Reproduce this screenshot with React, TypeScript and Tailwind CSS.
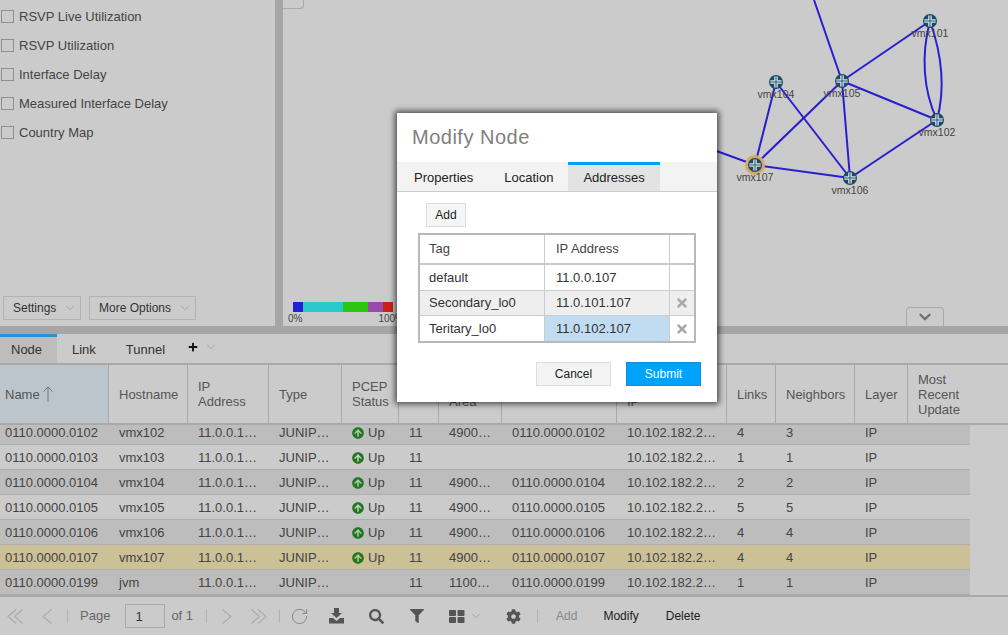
import { ChevronDown, RotateCw } from "lucide-react";
import { FaArrowCircleUp, FaCog, FaFilter, FaPlus, FaSearch, FaTimes } from "react-icons/fa";

const overlays = ["RSVP Live Utilization", "RSVP Utilization", "Interface Delay", "Measured Interface Delay", "Country Map"];

const nodes = [
  { name: "vmx101", x: 930, y: 21 },
  { name: "vmx105", x: 842, y: 81 },
  { name: "vmx104", x: 776, y: 82 },
  { name: "vmx102", x: 937, y: 120 },
  { name: "vmx107", x: 755, y: 165 },
  { name: "vmx106", x: 850, y: 178 },
];

const links = [
  [842, 81, 814, 0],
  [842, 81, 930, 21],
  [842, 81, 937, 120],
  [842, 81, 850, 178],
  [842, 81, 755, 165],
  [776, 82, 755, 165],
  [776, 82, 850, 178],
  [755, 165, 850, 178],
  [850, 178, 937, 120],
  [755, 165, 700, 145],
];

const cols = "grid grid-cols-[108px_79px_81px_73px_57px_40px_63px_115px_110px_49px_79px_53px_63px]";

const rows = [
  { id: "0110.0000.0102", host: "vmx102", up: true, area: "4900…", iso: "0110.0000.0102", links: 4, nb: 3, bg: "bg-[#bdbdbd]" },
  { id: "0110.0000.0103", host: "vmx103", up: true, area: "", iso: "", links: 1, nb: 1, bg: "bg-[#cbcbcb]" },
  { id: "0110.0000.0104", host: "vmx104", up: true, area: "4900…", iso: "0110.0000.0104", links: 2, nb: 2, bg: "bg-[#bdbdbd]" },
  { id: "0110.0000.0105", host: "vmx105", up: true, area: "4900…", iso: "0110.0000.0105", links: 5, nb: 5, bg: "bg-[#cbcbcb]" },
  { id: "0110.0000.0106", host: "vmx106", up: true, area: "4900…", iso: "0110.0000.0106", links: 4, nb: 4, bg: "bg-[#bdbdbd]" },
  { id: "0110.0000.0107", host: "vmx107", up: true, area: "4900…", iso: "0110.0000.0107", links: 4, nb: 4, bg: "bg-[#ccc097]" },
  { id: "0110.0000.0199", host: "jvm", up: false, area: "1100…", iso: "0110.0000.0199", links: 1, nb: 1, bg: "bg-[#bdbdbd]" },
];

function RouterNode({ x, y, selected }: { x: number; y: number; selected?: boolean }) {
  return (
    <g transform={`translate(${x} ${y})`}>
      {selected && <circle r="10" fill="#d9a862" />}
      <circle r="7" fill="#1d4a66" />
      <path d="M-1.8 -5.6H1.8V-1.8H5.6V1.8H1.8V5.6H-1.8V1.8H-5.6V-1.8H-1.8Z" fill="#d5e2e8" />
      <path d="M0 -5.6V5.6M-5.6 0H5.6" stroke="#1d4a66" strokeWidth="0.9" />
    </g>
  );
}

function HeaderCell({ children, active, first }: { children: React.ReactNode; active?: boolean; first?: boolean }) {
  return (
    <div className={`flex items-center leading-[15px] ${first ? "pl-[5px]" : "pl-[10px] border-l border-[#a9a9a9]"} ${active ? "bg-[#bcc5cc]" : ""}`}>
      {children}
    </div>
  );
}

function Cell({ children, first }: { children?: React.ReactNode; first?: boolean }) {
  return <div className={`whitespace-nowrap pt-[1px] ${first ? "pl-[5px]" : "pl-[11px]"}`}>{children}</div>;
}

function Separator() {
  return <div className="w-px h-[14px] bg-[#b4b4b4]" />;
}

function PageArrow({ right, double, className }: { right?: boolean; double?: boolean; className?: string }) {
  const w = double ? 16 : 10;
  const d = double ? "M9 0.5L1 7.5L9 14.5M15.5 0.5L7.5 7.5L15.5 14.5" : "M9.5 0.5L1 7.5L9.5 14.5";
  return (
    <svg className={`${right ? "-scale-x-100" : ""} ${className ?? ""}`} width={w} height="15" viewBox={`0 0 ${w} 15`} fill="none" stroke="#aaaaaa" strokeWidth="1.1">
      <path d={d} />
    </svg>
  );
}

export default function App() {
  return (
    <div className="relative w-[1008px] h-[635px] overflow-hidden bg-[#cbcbcb] text-[13px] text-[#444] font-['Liberation_Sans',Arial,sans-serif]">
      {/* Top area */}
      <div className="flex h-[326px]">
        <div className="w-[275px] flex flex-col justify-between pt-[2px] pb-[6px]">
          <div>
            {overlays.map((label) => (
              <div key={label} className="flex items-center h-[29px] pl-[1px]">
                <span className="w-[13px] h-[13px] border border-[#8f8f8f] mr-[5px]" />
                <span>{label}</span>
              </div>
            ))}
          </div>
          <div className="flex gap-[8px] pl-[3px] text-[12px] text-[#333]">
            <button className="flex items-center justify-between w-[78px] h-[24px] border border-[#b2b2b2] pl-[9px] pr-[3px]">
              Settings <ChevronDown size={14} strokeWidth={1} className="text-[#888]" />
            </button>
            <button className="flex items-center justify-between w-[107px] h-[24px] border border-[#b2b2b2] pl-[9px] pr-[3px]">
              More Options <ChevronDown size={14} strokeWidth={1} className="text-[#888]" />
            </button>
          </div>
        </div>
        <div className="w-[8px] bg-[#a6a6a6]" />

        {/* Topology canvas */}
        <div className="relative flex-1">
          <svg className="absolute inset-0 w-[725px] h-[326px]" viewBox="283 0 725 326">
            <g stroke="#2a1fd0" strokeWidth="2" fill="none">
              {links.map((l, i) => (
                <line key={i} x1={l[0]} y1={l[1]} x2={l[2]} y2={l[3]} />
              ))}
              <path d="M930 21C921 55 923 90 937 120" />
              <path d="M930 21C942 55 945 90 937 120" />
            </g>
            {nodes.map((n) => (
              <g key={n.name}>
                <RouterNode x={n.x} y={n.y} selected={n.name === "vmx107"} />
                <text x={n.x} y={n.y + 16} textAnchor="middle" fontSize="10.5" fill="#444">
                  {n.name}
                </text>
              </g>
            ))}
          </svg>
          <div className="absolute left-0 top-0 w-[21px] h-[9px] border-r border-b border-[#a9a9a9] rounded-br-[4px]" />
          <div className="absolute left-[5px] top-[302px] w-[120px] text-[10px] leading-[11px] text-[#444]">
            <div className="flex h-[10px] ml-[5px]">
              <div className="w-[10px] bg-[#2222d0]" />
              <div className="w-[40px] bg-[#2ac9cc]" />
              <div className="w-[25px] bg-[#2cc510]" />
              <div className="w-[15px] bg-[#9b47ab]" />
              <div className="w-[10px] bg-[#c92316]" />
            </div>
            <div className="flex justify-between mt-[1px] w-[116px]">
              <span>0%</span>
              <span>100%</span>
            </div>
          </div>
          <div className="absolute left-[623px] top-[307px] w-[38px] h-[19px] border border-b-0 border-[#a9a9a9] rounded-t-[4px] flex items-center justify-center">
            <ChevronDown size={18} strokeWidth={3.2} className="text-[#707070]" />
          </div>
        </div>
      </div>
      <div className="h-[8px] bg-[#a6a6a6]" />

      {/* Tabs */}
      <div className="flex h-[31px] border-b-[2px] border-[#a9a9a9] text-[#333]">
        <div className="w-[57px] h-[29px] border-t-[3px] border-[#2a8ed8] bg-[#bdbdbd] pl-[11px] pt-[3px] leading-[20px]">Node</div>
        <div className="pl-[15px] pt-[6px] leading-[20px]">Link</div>
        <div className="pl-[30px] pt-[6px] leading-[20px]">Tunnel</div>
        <div className="flex items-center pl-[23px] pb-[4px]">
          <FaPlus size={10} className="text-[#111]" />
          <ChevronDown size={14} strokeWidth={1} className="ml-[6px] text-[#888]" />
        </div>
      </div>

      {/* Table header */}
      <div className={`${cols} h-[60px] border-b-[2px] border-[#a9a9a9] text-[#555]`}>
        <HeaderCell first active>
          Name
          <svg className="ml-[3px]" width="10" height="16" viewBox="0 0 10 16" fill="none" stroke="#777777" strokeWidth="1">
            <path d="M5 1V16M0.5 5.5L5 1L9.5 5.5" />
          </svg>
        </HeaderCell>
        <HeaderCell>Hostname</HeaderCell>
        <HeaderCell>IP<br />Address</HeaderCell>
        <HeaderCell>Type</HeaderCell>
        <HeaderCell>PCEP<br />Status</HeaderCell>
        <HeaderCell>AS</HeaderCell>
        <HeaderCell>ISIS<br />Area</HeaderCell>
        <HeaderCell>ISO</HeaderCell>
        <HeaderCell>Management<br />IP</HeaderCell>
        <HeaderCell>Links</HeaderCell>
        <HeaderCell>Neighbors</HeaderCell>
        <HeaderCell>Layer</HeaderCell>
        <HeaderCell>Most<br />Recent<br />Update</HeaderCell>
      </div>

      {/* Table rows */}
      <div className="h-[170px] overflow-hidden">
        <div className="-mt-[5px]">
          {rows.map((r) => (
            <div key={r.id} className={`${cols} w-[970px] h-[25px] items-center border-b border-[#aeaeae] ${r.bg}`}>
              <Cell first>{r.id}</Cell>
              <Cell>{r.host}</Cell>
              <Cell>11.0.0.1…</Cell>
              <Cell>JUNIP…</Cell>
              <Cell>
                {r.up && (
                  <span className="flex items-center gap-[4px]">
                    <FaArrowCircleUp size={12} className="text-[#1c7a1c]" /> Up
                  </span>
                )}
              </Cell>
              <Cell>11</Cell>
              <Cell>{r.area}</Cell>
              <Cell>{r.iso}</Cell>
              <Cell>10.102.182.2…</Cell>
              <Cell>{r.links}</Cell>
              <Cell>{r.nb}</Cell>
              <Cell>IP</Cell>
              <Cell />
            </div>
          ))}
        </div>
      </div>

      {/* Footer toolbar */}
      <div className="flex items-center h-[40px] border-t-[2px] border-[#a9a9a9] text-[#666]">
        <PageArrow double className="ml-[7px]" />
        <PageArrow className="ml-[19px]" />
        <div className="ml-[15px]"><Separator /></div>
        <span className="ml-[12px]">Page</span>
        <div className="ml-[15px] w-[40px] h-[24px] border border-[#a9a9a9] pl-[9px] leading-[24px] text-[#333]">1</div>
        <span className="ml-[6px]">of 1</span>
        <div className="ml-[13px]"><Separator /></div>
        <PageArrow right className="ml-[15px]" />
        <PageArrow right double className="ml-[19px]" />
        <div className="ml-[12px]"><Separator /></div>
        <RotateCw size={19} strokeWidth={1} className="ml-[10px] text-[#777]" />
        <svg className="ml-[19px]" width="17" height="16" viewBox="0 0 17 16" fill="#555">
          <path d="M6 0H11V5H14L8.5 10L3 5H6Z" />
          <path d="M1 10H5L8.5 13L12 10H16V15.5H1Z" />
        </svg>
        <FaSearch size={15} className="ml-[24px] text-[#555]" />
        <FaFilter size={14} className="ml-[26px] text-[#555]" />
        <svg className="ml-[25px]" width="16" height="13" viewBox="0 0 16 13" fill="#555">
          <rect width="7" height="6" rx="1" />
          <rect x="8.5" width="7" height="6" rx="1" />
          <rect y="7" width="7" height="6" rx="1" />
          <rect x="8.5" y="7" width="7" height="6" rx="1" />
        </svg>
        <ChevronDown size={14} strokeWidth={1} className="ml-[4px] text-[#888]" />
        <FaCog size={15} className="ml-[23px] text-[#555]" />
        <div className="ml-[16px]"><Separator /></div>
        <span className="ml-[18px] text-[12px] text-[#888]">Add</span>
        <span className="ml-[26px] text-[12px] text-[#222]">Modify</span>
        <span className="ml-[27px] text-[12px] text-[#222]">Delete</span>
      </div>

      {/* Modify Node dialog */}
      <div className="absolute left-[397px] top-[113px] w-[320px] h-[289px] bg-white shadow-[0_0_6px_2px_rgba(0,0,0,0.65)] text-[#333]">
        <div className="h-[49px] pl-[15px] pt-[11px] text-[20px] leading-[26px] tracking-[0.5px] text-[#808080]">Modify Node</div>
        <div className="flex h-[30px] bg-[#f3f3f3] border-b border-[#ccc] text-[#222]">
          <div className="pl-[17px] pt-[8px] leading-[16px]">Properties</div>
          <div className="pl-[31px] pt-[8px] leading-[16px]">Location</div>
          <div className="ml-[15px] w-[92px] h-[29px] border-t-[3px] border-[#00a2ff] bg-[#e3e3e3] pl-[15px] pt-[5px] leading-[16px]">Addresses</div>
        </div>
        <div className="pl-[29px] pt-[11px]">
          <button className="w-[40px] h-[24px] border border-[#ddd] bg-[#f5f5f5] text-[12px] text-[#222]">Add</button>
        </div>
        <div className="ml-[21px] mt-[6px] w-[278px] border-2 border-[#b8b8b8]">
          <div className="grid grid-cols-[125px_125px_1fr] h-[30px] items-center border-b-[2px] border-[#c8c8c8] text-[#444]">
            <div className="pl-[9px] border-r border-[#ccc] h-full flex items-center">Tag</div>
            <div className="pl-[11px] border-r border-[#ccc] h-full flex items-center">IP Address</div>
            <div />
          </div>
          {[
            { tag: "default", ip: "11.0.0.107", del: false, bg: "", h: "h-[26px] border-b border-[#ccc]" },
            { tag: "Secondary_lo0", ip: "11.0.101.107", del: true, bg: "bg-[#eeeeee]", h: "h-[25px] border-b border-[#ccc]" },
            { tag: "Teritary_lo0", ip: "11.0.102.107", del: true, bg: "", h: "h-[25px]" },
          ].map((r, i) => (
            <div key={r.tag} className={`grid grid-cols-[125px_125px_1fr] ${r.h} ${r.bg}`}>
              <div className="pl-[9px] border-r border-[#ccc] flex items-center">{r.tag}</div>
              <div className={`pl-[11px] border-r border-[#ccc] flex items-center ${i === 2 ? "bg-[#c1dcf0]" : ""}`}>{r.ip}</div>
              <div className="flex items-center justify-center">
                {r.del && <FaTimes size={14} className="text-[#a8a8a8]" />}
              </div>
            </div>
          ))}
        </div>
        <div className="flex justify-end gap-[15px] pr-[16px] mt-[19px] text-[12px]">
          <button className="w-[75px] h-[24px] border border-[#ddd] bg-[#f3f3f3] text-[#222]">Cancel</button>
          <button className="w-[75px] h-[24px] border border-[#0a8fd8] bg-[#00a2ff] text-white">Submit</button>
        </div>
      </div>
    </div>
  );
}
